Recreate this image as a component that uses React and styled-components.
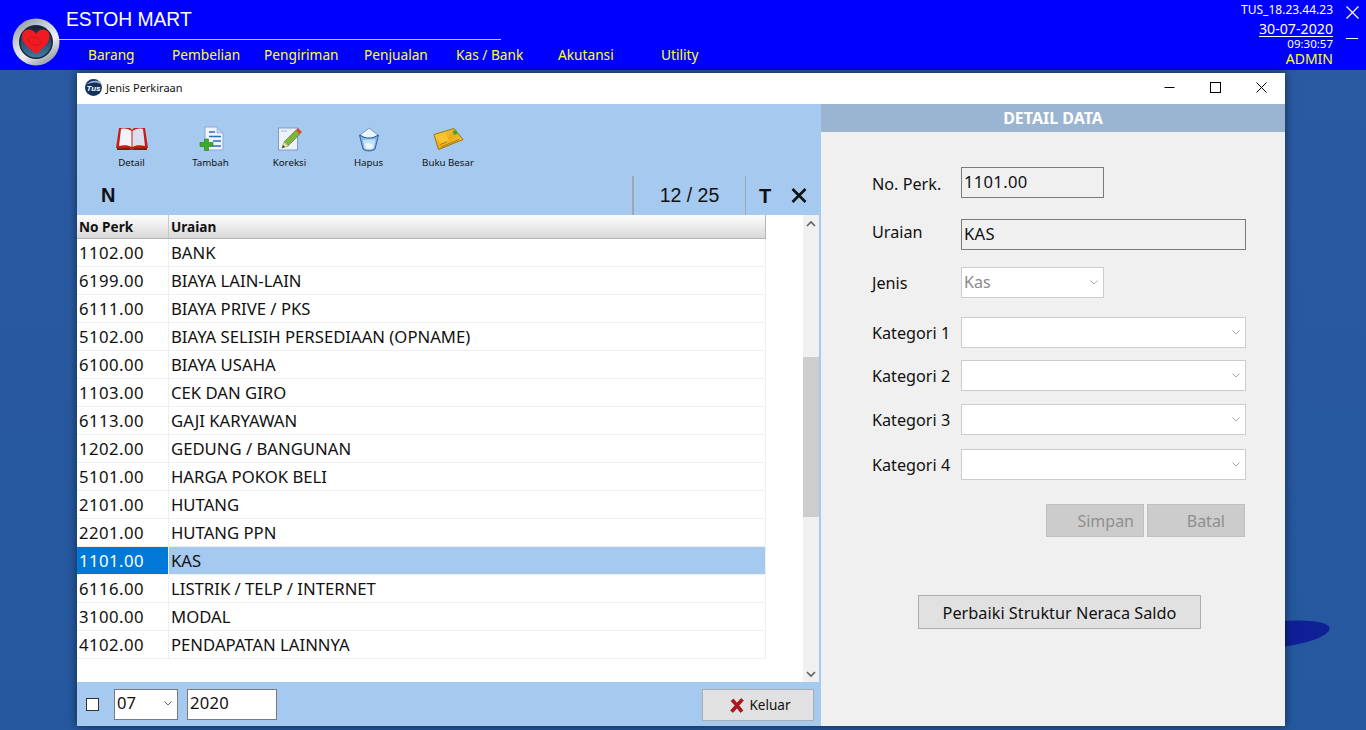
import styled, { createGlobalStyle } from "styled-components";

const ui = '"Noto Sans", "Open Sans", sans-serif';
const arial = '"Liberation Sans", Arial, sans-serif';

const GlobalStyle = createGlobalStyle`
  html, body { margin: 0; padding: 0; height: 100%; overflow: hidden; }
  body { background: #25589e; font-family: ${ui}; }
`;

const navItems = [
  { label: "Barang", w: 84 },
  { label: "Pembelian", w: 92 },
  { label: "Pengiriman", w: 100 },
  { label: "Penjualan", w: 92 },
  { label: "Kas / Bank", w: 102 },
  { label: "Akutansi", w: 103 },
  { label: "Utility", w: 60 },
];

const rows = [
  ["1102.00", "BANK"],
  ["6199.00", "BIAYA LAIN-LAIN"],
  ["6111.00", "BIAYA PRIVE / PKS"],
  ["5102.00", "BIAYA SELISIH PERSEDIAAN (OPNAME)"],
  ["6100.00", "BIAYA USAHA"],
  ["1103.00", "CEK DAN GIRO"],
  ["6113.00", "GAJI KARYAWAN"],
  ["1202.00", "GEDUNG / BANGUNAN"],
  ["5101.00", "HARGA POKOK BELI"],
  ["2101.00", "HUTANG"],
  ["2201.00", "HUTANG PPN"],
  ["1101.00", "KAS"],
  ["6116.00", "LISTRIK / TELP / INTERNET"],
  ["3100.00", "MODAL"],
  ["4102.00", "PENDAPATAN LAINNYA"],
];

function Chevron({ color = "#888", size = 10 }) {
  return (
    <svg width={size} height={size} viewBox="0 0 10 10">
      <path d="M1.5 3.5 L5 7 L8.5 3.5" fill="none" stroke={color} strokeWidth="1" />
    </svg>
  );
}

function HeartLogo() {
  return (
    <svg width="48" height="48" viewBox="0 0 48 48">
      <defs>
        <linearGradient id="ring" x1="0" y1="0" x2="0.6" y2="1">
          <stop offset="0" stopColor="#7f868f" />
          <stop offset="0.4" stopColor="#c9ced4" />
          <stop offset="0.7" stopColor="#eef0f3" />
          <stop offset="1" stopColor="#9ea4ab" />
        </linearGradient>
        <linearGradient id="face" x1="0" y1="0" x2="0" y2="1">
          <stop offset="0" stopColor="#0f2338" />
          <stop offset="1" stopColor="#43799f" />
        </linearGradient>
      </defs>
      <circle cx="24" cy="24" r="23.5" fill="url(#ring)" />
      <circle cx="24" cy="24" r="17" fill="#16273a" />
      <circle cx="24" cy="24" r="15.5" fill="url(#face)" />
      <path d="M24 36 C17 30 10 25 10 18.5 C10 13.5 14 11 18 11.5 C21 12 23 14 24 16 C25.5 13.5 28 11.5 31 11.5 C35 11.5 38 14.5 37.5 19 C37 25 30 31 24 36 Z" fill="#f21a22" />
      <path d="M16 21 C19 18 23 19 26 21 C29 23 30 26 26 27 C22 28 18 26 16 21 Z" fill="none" stroke="#c01420" strokeWidth="0.8" />
    </svg>
  );
}

function TusBadge() {
  return (
    <svg width="17" height="17" viewBox="0 0 17 17">
      <circle cx="8.5" cy="8.5" r="8.5" fill="#14305f" />
      <path d="M1 6 C5 3 12 2.5 16 5 L16 3.5 C12 0.5 5 1 1 6 Z" fill="#9db4d4" />
      <text x="8.5" y="12" textAnchor="middle" fontSize="8" fontWeight="700" fontStyle="italic" fontFamily={arial} fill="#fff">Tus</text>
    </svg>
  );
}

function BookIcon() {
  return (
    <svg width="34" height="26" viewBox="0 0 34 26">
      <path d="M4 2 L15 2 L17 4 L19 2 L30 2 L33 22 L19 22 L17 24 L15 22 L1 22 Z" fill="#c81a12" />
      <path d="M6 3 C10 2 14 3 16.5 5 L16.5 21 C13 19 9 19 4 20 Z" fill="#f1f3fa" />
      <path d="M28 3 C24 2 20 3 17.5 5 L17.5 21 C21 19 25 19 30 20 Z" fill="#d9dfee" />
      <path d="M2 22 L15 22 L17 24 L19 22 L32 22 L32 24 L2 24 Z" fill="#8e1610" />
    </svg>
  );
}

function AddDocIcon() {
  return (
    <svg width="26" height="26" viewBox="0 0 26 26">
      <path d="M7 1 L19 1 L25 7 L25 24 L7 24 Z" fill="#eef4fc" stroke="#8ea9cd" />
      <path d="M19 1 L19 7 L25 7 Z" fill="#bcd0ea" stroke="#8ea9cd" strokeWidth="0.6" />
      <path d="M11 6 H17 M11 10.5 H23 M15 15 H23 M15 20 H23" stroke="#2f6cc0" strokeWidth="1.6" />
      <path d="M6.5 13 H10.5 V16.5 H15 V20.5 H10.5 V24.5 H6.5 V20.5 H2 V16.5 H6.5 Z" fill="#3cab2d" stroke="#217a18" strokeWidth="0.6" />
    </svg>
  );
}

function EditIcon() {
  return (
    <svg width="26" height="26" viewBox="0 0 26 26">
      <rect x="1.5" y="2" width="19" height="22" fill="#eef3fb" stroke="#7f9cc4" />
      <path d="M4 5 H10" stroke="#9db6d8" strokeWidth="1" />
      <path d="M5 22 L7 16 L19 4 L23 8 L11 20 Z" fill="#7db43c" stroke="#3f7a1f" strokeWidth="0.6" />
      <path d="M5 22 L7 16 L11 20 Z" fill="#f0d9a8" />
      <path d="M5 22 L6 19 L8 21 Z" fill="#333" />
      <path d="M19 4 L21 2 L25 6 L23 8 Z" fill="#e2442c" />
    </svg>
  );
}

function BinIcon() {
  return (
    <svg width="22" height="25" viewBox="0 0 22 25">
      <path d="M2 8 L11 1 L20 8 L11 13 Z" fill="#eef4fc" stroke="#5d85b5" strokeWidth="0.8" />
      <path d="M1.5 8 L5 22 C7 24.5 15 24.5 17 22 L20.5 8 C15 12 7 12 1.5 8 Z" fill="#86b9ea" stroke="#2f5f98" />
      <path d="M5 13 C9 12 14 13 17.5 12 L16 21 C12 23 9 23 6.5 21 Z" fill="#c4e0f8" />
      <path d="M7 17 C10 15 13 16 15 18 L14.5 21 C12 22 9.5 22 8 21 Z" fill="#eef6fd" />
    </svg>
  );
}

function CardIcon() {
  return (
    <svg width="32" height="24" viewBox="0 0 32 24">
      <defs>
        <linearGradient id="gold" x1="0" y1="0" x2="1" y2="1">
          <stop offset="0" stopColor="#f9dc3f" />
          <stop offset="0.5" stopColor="#eeab16" />
          <stop offset="1" stopColor="#f0d45a" />
        </linearGradient>
      </defs>
      <path d="M2 7.5 L22 1.5 L31 12.5 L6.5 22.5 Z" fill="url(#gold)" stroke="#9c7410" strokeWidth="1" strokeLinejoin="round" />
      <path d="M5 9.5 L14 7 L17 14 L8.5 17.5 Z" fill="#f7c531" />
      <path d="M9 20 L27 12.5 M8 17.5 L15 14.7" stroke="#a87c14" strokeWidth="1" />
      <circle cx="23" cy="5.5" r="2.2" fill="#3fa83a" />
    </svg>
  );
}

function RedCross() {
  return (
    <svg width="14" height="15" viewBox="0 0 14 15">
      <path d="M1 3 L3.5 1 L7 5 L11 0.5 L13.5 2.5 L9 7.5 L13 12.5 L10.5 14.5 L7 10 L3 14.5 L0.5 12.5 L5 7.5 Z" fill="#b5121b" stroke="#6d0a10" strokeWidth="0.5" />
    </svg>
  );
}

const tools = [
  { label: "Detail", Icon: BookIcon, w: 79 },
  { label: "Tambah", Icon: AddDocIcon, w: 79 },
  { label: "Koreksi", Icon: EditIcon, w: 79 },
  { label: "Hapus", Icon: BinIcon, w: 79 },
  { label: "Buku Besar", Icon: CardIcon, w: 80 },
];

export default function App() {
  return (
    <Page>
      <GlobalStyle />
      <TopBar>
        <LogoWrap>
          <HeartLogo />
        </LogoWrap>
        <Brand>
          <BrandTitle>ESTOH MART</BrandTitle>
          <BrandRule />
          <Nav>
            {navItems.map((n) => (
              <NavItem key={n.label} $w={n.w}>
                {n.label}
              </NavItem>
            ))}
          </Nav>
        </Brand>
        <Session>
          <SessionHost>TUS_18.23.44.23</SessionHost>
          <SessionDate>30-07-2020</SessionDate>
          <SessionTime>09:30:57</SessionTime>
          <SessionUser>ADMIN</SessionUser>
        </Session>
        <AppControls>
          <svg width="13" height="13" viewBox="0 0 13 13">
            <path d="M0.5 0.5 L12.5 12.5 M12.5 0.5 L0.5 12.5" stroke="#fff" strokeWidth="1.2" />
          </svg>
          <AppDash />
        </AppControls>
      </TopBar>

      <Desktop>
        <Streak />
        <Window>
          <TitleBar>
            <TitleLeft>
              <TusBadge />
              <TitleText>Jenis Perkiraan</TitleText>
            </TitleLeft>
            <WinButtons>
              <WinButton>
                <svg width="11" height="11" viewBox="0 0 11 11">
                  <path d="M0.5 5.5 H10.5" stroke="#000" />
                </svg>
              </WinButton>
              <WinButton>
                <svg width="11" height="11" viewBox="0 0 11 11">
                  <rect x="0.5" y="0.5" width="10" height="10" fill="none" stroke="#000" />
                </svg>
              </WinButton>
              <WinButton>
                <svg width="11" height="11" viewBox="0 0 11 11">
                  <path d="M0.5 0.5 L10.5 10.5 M10.5 0.5 L0.5 10.5" stroke="#000" />
                </svg>
              </WinButton>
            </WinButtons>
          </TitleBar>

          <WindowBody>
            <LeftPanel>
              <Toolbar>
                {tools.map(({ label, Icon, w }) => (
                  <ToolButton key={label} $w={w}>
                    <ToolIcon>
                      <Icon />
                    </ToolIcon>
                    <ToolLabel>{label}</ToolLabel>
                  </ToolButton>
                ))}
              </Toolbar>

              <FilterBar>
                <FilterLetter>N</FilterLetter>
                <Counter>12 / 25</Counter>
                <FilterAction $w={38}>T</FilterAction>
                <FilterAction $w={30}>
                  <svg width="16" height="15" viewBox="0 0 16 15">
                    <path d="M1.5 1 L14.5 14 M14.5 1 L1.5 14" stroke="#111" strokeWidth="2.6" />
                  </svg>
                </FilterAction>
              </FilterBar>

              <TableArea>
                <Table>
                  <HeadRow>
                    <HeadCell $w={92}>No Perk</HeadCell>
                    <HeadCell $grow>Uraian</HeadCell>
                  </HeadRow>
                  {rows.map(([no, name]) => {
                    const selected = no === "1101.00";
                    return (
                      <Row key={no} $selected={selected}>
                        <CodeCell $selected={selected}>{no}</CodeCell>
                        <NameCell>{name}</NameCell>
                      </Row>
                    );
                  })}
                </Table>
                <Scrollbar>
                  <ScrollArrow>
                    <svg width="10" height="8" viewBox="0 0 10 8">
                      <path d="M1 6 L5 2 L9 6" fill="none" stroke="#606060" strokeWidth="1.6" />
                    </svg>
                  </ScrollArrow>
                  <ScrollTrack>
                    <ScrollThumb />
                  </ScrollTrack>
                  <ScrollArrow>
                    <svg width="10" height="8" viewBox="0 0 10 8">
                      <path d="M1 2 L5 6 L9 2" fill="none" stroke="#606060" strokeWidth="1.6" />
                    </svg>
                  </ScrollArrow>
                </Scrollbar>
              </TableArea>

              <BottomBar>
                <CheckBox type="checkbox" />
                <MonthSelect>
                  <span>07</span>
                  <Chevron color="#666" />
                </MonthSelect>
                <YearInput readOnly value="2020" />
                <ExitButton>
                  <RedCross />
                  Keluar
                </ExitButton>
              </BottomBar>
            </LeftPanel>

            <RightPanel>
              <DetailHeader>DETAIL DATA</DetailHeader>
              <Form>
                <FormRow $mt={35}>
                  <FieldLabel $shift={2}>No. Perk.</FieldLabel>
                  <ReadOnlyInput readOnly value="1101.00" $w={143} />
                </FormRow>
                <FormRow $mt={21}>
                  <FieldLabel $shift={-6}>Uraian</FieldLabel>
                  <ReadOnlyInput readOnly value="KAS" $w={285} />
                </FormRow>
                <FormRow $mt={17}>
                  <FieldLabel>Jenis</FieldLabel>
                  <Combo $w={143} $disabled>
                    <span>Kas</span>
                    <Chevron color="#aaa" />
                  </Combo>
                </FormRow>
                <FormRow $mt={19}>
                  <FieldLabel>Kategori 1</FieldLabel>
                  <Combo $w={285}>
                    <Chevron color="#aaa" />
                  </Combo>
                </FormRow>
                <FormRow $mt={12}>
                  <FieldLabel>Kategori 2</FieldLabel>
                  <Combo $w={285}>
                    <Chevron color="#aaa" />
                  </Combo>
                </FormRow>
                <FormRow $mt={13}>
                  <FieldLabel>Kategori 3</FieldLabel>
                  <Combo $w={285}>
                    <Chevron color="#aaa" />
                  </Combo>
                </FormRow>
                <FormRow $mt={14}>
                  <FieldLabel>Kategori 4</FieldLabel>
                  <Combo $w={285}>
                    <Chevron color="#aaa" />
                  </Combo>
                </FormRow>
                <ActionRow>
                  <DisabledButton disabled $pr={9}>Simpan</DisabledButton>
                  <DisabledButton disabled $pr={19}>Batal</DisabledButton>
                </ActionRow>
                <RepairButton>Perbaiki Struktur Neraca Saldo</RepairButton>
              </Form>
            </RightPanel>
          </WindowBody>
        </Window>
      </Desktop>
    </Page>
  );
}

const Page = styled.div`
  width: 1366px;
  height: 730px;
  display: flex;
  flex-direction: column;
  overflow: hidden;
`;

const TopBar = styled.header`
  height: 70px;
  flex: none;
  background: #0000ff;
  display: flex;
  padding-left: 12px;
  color: #fff;
`;
const LogoWrap = styled.div`
  margin-top: 18px;
  height: 48px;
  flex: none;
  position: relative;
  z-index: 1;
`;
const Brand = styled.div`
  width: 442px;
  margin-left: -1px;
  flex: none;
  display: flex;
  flex-direction: column;
`;
const BrandTitle = styled.div`
  font: 19.3px/20px ${arial};
  margin: 10px 0 0 7px;
`;
const BrandRule = styled.div`
  height: 1px;
  background: #c4c4ff;
  margin-top: 9px;
`;
const Nav = styled.nav`
  display: flex;
  padding: 5px 0 0 29px;
`;
const NavItem = styled.div`
  width: ${(p) => p.$w}px;
  flex: none;
  color: #ffff30;
  font-size: 13.7px;
  line-height: 19px;
  white-space: nowrap;
`;
const Session = styled.div`
  margin-left: auto;
  width: 110px;
  padding-top: 2px;
  display: flex;
  flex-direction: column;
  align-items: flex-end;
`;
const SessionHost = styled.div`
  font-size: 12px;
  line-height: 16px;
`;
const SessionDate = styled.div`
  font-size: 14.2px;
  line-height: 15px;
  margin-top: 3px;
  border-bottom: 1px solid #fff;
`;
const SessionTime = styled.div`
  font-size: 11.5px;
  line-height: 13px;
`;
const SessionUser = styled.div`
  color: #ffff30;
  font-size: 14px;
  line-height: 18px;
`;
const AppControls = styled.div`
  width: 28px;
  padding-left: 5px;
  flex: none;
  display: flex;
  flex-direction: column;
  align-items: center;
  padding-top: 6px;
`;
const AppDash = styled.div`
  width: 12px;
  height: 1px;
  background: #fff;
  margin-top: 19px;
`;

const Desktop = styled.main`
  flex: 1;
  min-height: 0;
  position: relative;
  padding: 3px 81px 4px 77px;
  background: linear-gradient(#2a5aa2, #25589e);
`;
const Streak = styled.div`
  position: absolute;
  left: 1220px;
  top: 552px;
  width: 110px;
  height: 26px;
  border-radius: 50%;
  background: #0f2096;
  transform: rotate(-7deg);
`;
const Window = styled.section`
  position: relative;
  height: 100%;
  display: flex;
  flex-direction: column;
  background: #fff;
  box-shadow: 0 0 9px rgba(0, 0, 0, 0.55);
`;
const TitleBar = styled.div`
  height: 31px;
  box-sizing: border-box;
  padding-bottom: 2px;
  flex: none;
  display: flex;
  align-items: center;
  justify-content: space-between;
  background: #fff;
`;
const TitleLeft = styled.div`
  display: flex;
  align-items: center;
  padding-left: 8px;
  gap: 4px;
`;
const TitleText = styled.span`
  font-size: 11px;
  color: #111;
`;
const WinButtons = styled.div`
  display: flex;
  padding-right: 1px;
`;
const WinButton = styled.div`
  width: 46px;
  height: 29px;
  display: flex;
  align-items: center;
  justify-content: center;
`;
const WindowBody = styled.div`
  flex: 1;
  min-height: 0;
  display: flex;
`;

const LeftPanel = styled.div`
  width: 744px;
  flex: none;
  display: flex;
  flex-direction: column;
  background: #a6c9ef;
`;
const Toolbar = styled.div`
  height: 72px;
  flex: none;
  display: flex;
  padding-left: 15px;
`;
const ToolButton = styled.div`
  width: ${(p) => p.$w}px;
  flex: none;
  display: flex;
  flex-direction: column;
  align-items: center;
`;
const ToolIcon = styled.div`
  height: 26px;
  margin-top: 22px;
  display: flex;
  align-items: center;
  justify-content: center;
`;
const ToolLabel = styled.div`
  font-size: 9.7px;
  line-height: 13px;
  margin-top: 4px;
  color: #111;
  white-space: nowrap;
`;

const FilterBar = styled.div`
  height: 39px;
  flex: none;
  display: flex;
  align-items: center;
  color: #111;
`;
const FilterLetter = styled.div`
  font: 700 20px/1 ${arial};
  width: 555px;
  flex: none;
  padding: 0 0 2px 24px;
  box-sizing: border-box;
`;
const Counter = styled.div`
  width: 111px;
  height: 100%;
  flex: none;
  font: 19.5px/38px ${arial};
  text-align: center;
  border-left: 2px solid #a0a8b2;
  border-right: 1px solid #a0a8b2;
`;
const FilterAction = styled.div`
  width: ${(p) => p.$w}px;
  flex: none;
  text-align: center;
  font: 700 20px/1 ${arial};
  display: flex;
  justify-content: center;
`;

const TableArea = styled.div`
  flex: 1;
  min-height: 0;
  display: flex;
  background: #fff;
  margin-right: 2px;
  justify-content: space-between;
`;
const Table = styled.div`
  width: 689px;
  flex: none;
`;
const HeadRow = styled.div`
  height: 24px;
  display: flex;
  background: linear-gradient(#fdfdfd, #d9d9d9);
  border-bottom: 1px solid #b4b4b4;
  border-right: 1px solid #b4b4b4;
  box-sizing: border-box;
`;
const HeadCell = styled.div`
  ${(p) => (p.$grow ? "flex: 1;" : `width: ${p.$w}px; flex: none; border-right: 1px solid #c8c8c8;`)}
  box-sizing: border-box;
  padding-left: 2px;
  font-size: 13.6px;
  font-weight: 700;
  line-height: 24px;
  color: #111;
`;
const Row = styled.div`
  height: 28px;
  box-sizing: border-box;
  display: flex;
  background: ${(p) => (p.$selected ? "#a6c9ef" : "#fff")};
  border-bottom: 1px solid #efefef;
  border-right: 1px solid #efefef;
  font-size: 16.7px;
  line-height: 28px;
  color: #111;
`;
const CodeCell = styled.div`
  width: 92px;
  flex: none;
  box-sizing: border-box;
  padding-left: 2px;
  letter-spacing: 0.45px;
  background: ${(p) => (p.$selected ? "#0078d7" : "transparent")};
  color: ${(p) => (p.$selected ? "#fff" : "inherit")};
  border-right: 1px solid #efefef;
`;
const NameCell = styled.div`
  flex: 1;
  padding-left: 2px;
  white-space: nowrap;
`;
const Scrollbar = styled.div`
  width: 16px;
  flex: none;
  display: flex;
  flex-direction: column;
  background: #f0f0f0;
`;
const ScrollArrow = styled.div`
  height: 17px;
  flex: none;
  display: flex;
  align-items: center;
  justify-content: center;
`;
const ScrollTrack = styled.div`
  flex: 1;
  padding-top: 125px;
`;
const ScrollThumb = styled.div`
  height: 160px;
  background: #cdcdcd;
`;

const BottomBar = styled.div`
  height: 44px;
  flex: none;
  display: flex;
  align-items: center;
  padding-left: 9px;
`;
const CheckBox = styled.input`
  appearance: none;
  width: 13px;
  height: 13px;
  margin: 0 15px 0 0;
  background: #fff;
  border: 1px solid #333;
  box-sizing: border-box;
`;
const MonthSelect = styled.div`
  width: 64px;
  height: 31px;
  box-sizing: border-box;
  background: #fff;
  border: 1px solid #7a7a7a;
  display: flex;
  align-items: center;
  justify-content: space-between;
  padding: 0 4px 3px 2px;
  font-size: 16.6px;
  color: #111;
`;
const YearInput = styled.input`
  width: 90px;
  height: 31px;
  box-sizing: border-box;
  margin-left: 9px;
  background: #fff;
  border: 1px solid #7a7a7a;
  padding: 0 2px 4px;
  font: 16.6px ${ui};
  letter-spacing: 0.3px;
  color: #111;
  outline: none;
`;
const ExitButton = styled.button`
  width: 112px;
  height: 32px;
  margin: 2px 7px 0 auto;
  box-sizing: border-box;
  background: #e1e1e1;
  border: 1px solid #adadad;
  display: flex;
  align-items: center;
  justify-content: center;
  gap: 6px;
  padding: 0 0 0 4px;
  font: 13.5px ${ui};
  color: #111;
`;

const RightPanel = styled.div`
  flex: 1;
  min-width: 0;
  display: flex;
  flex-direction: column;
  background: #f0f0f0;
`;
const DetailHeader = styled.div`
  height: 28px;
  flex: none;
  background: #9ab5d2;
  color: #fff;
  font-size: 16px;
  font-weight: 700;
  line-height: 28px;
  text-align: center;
`;
const Form = styled.div`
  padding-left: 51px;
  display: flex;
  flex-direction: column;
`;
const FormRow = styled.div`
  margin-top: ${(p) => p.$mt}px;
  display: flex;
  align-items: center;
  height: 31px;
`;
const FieldLabel = styled.label`
  width: 89px;
  flex: none;
  font-size: 16.2px;
  color: #111;
  padding-top: ${(p) => Math.max(p.$shift ?? 0, 0)}px;
  padding-bottom: ${(p) => Math.max(-(p.$shift ?? 0), 0)}px;
  white-space: nowrap;
`;
const ReadOnlyInput = styled.input`
  width: ${(p) => p.$w}px;
  height: 31px;
  box-sizing: border-box;
  background: #f0f0f0;
  border: 1px solid #7a7a7a;
  padding: 0 2px 2px;
  font: 16.6px ${ui};
  letter-spacing: 0.3px;
  color: #111;
  outline: none;
`;
const Combo = styled.div`
  width: ${(p) => p.$w}px;
  height: 31px;
  box-sizing: border-box;
  background: #fff;
  border: 1px solid #cccccc;
  display: flex;
  align-items: center;
  justify-content: ${(p) => (p.$disabled ? "space-between" : "flex-end")};
  padding: 0 4px 2px 2px;
  font-size: 16px;
  color: #8a8a8a;
`;
const ActionRow = styled.div`
  margin: 24px 0 0 174px;
  display: flex;
  gap: 3px;
`;
const DisabledButton = styled.button`
  width: 98px;
  height: 33px;
  box-sizing: border-box;
  background: #cccccc;
  border: 1px solid #bfbfbf;
  padding: 0 ${(p) => p.$pr}px 0 0;
  text-align: right;
  font: 16px ${ui};
  color: #8f8f8f;
`;
const RepairButton = styled.button`
  width: 283px;
  height: 34px;
  margin: 58px 0 0 46px;
  box-sizing: border-box;
  background: #e1e1e1;
  border: 1px solid #adadad;
  font: 16.3px ${ui};
  color: #111;
  white-space: nowrap;
  padding: 2px 0 0;
`;
